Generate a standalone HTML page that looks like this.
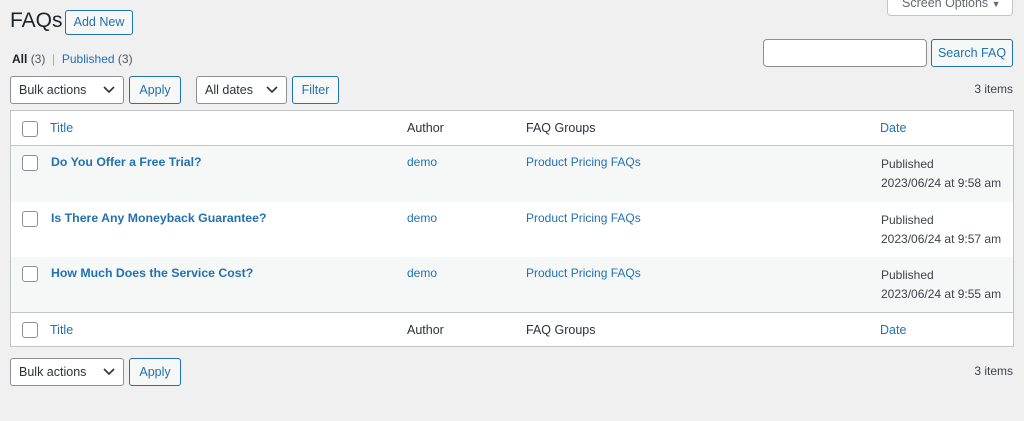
<!DOCTYPE html>
<html><head><style>
body{margin:0;width:1024px;height:421px;background:#f0f0f1;font-family:"Liberation Sans",sans-serif;font-size:13px;color:#3c434a;position:relative;overflow:hidden}
.a{position:absolute;white-space:nowrap}
a{color:#2271b1;text-decoration:none}
.btn{position:absolute;border:1px solid #2271b1;color:#2271b1;background:#f6f7f7;border-radius:3px;box-sizing:border-box;text-align:center;font-size:12.5px}
.sel{position:absolute;border:1px solid #8c8f94;background:#fff;border-radius:3px;box-sizing:border-box;padding-left:8px;font-size:12.5px;color:#2c3338}
.sel svg{position:absolute;right:8px;top:9px}
.cb{position:absolute;width:14px;height:14px;border:1px solid #8c8f94;border-radius:3px;background:#fff}
table{position:absolute;left:10px;top:110px;width:1004px;border-collapse:collapse;border:1px solid #c3c4c7;background:#fff}
td{padding:0;vertical-align:top;position:relative}
.t{font-weight:bold;font-size:12.3px}
</style></head><body>
<div class="a" style="left:10px;top:9px;font-size:21px;color:#1d2327">FAQs</div>
<div class="btn" style="left:65px;top:10px;width:68px;height:25px;line-height:23px;">Add New</div>
<div class="a" style="left:887px;top:-10px;width:126px;height:26px;background:#fff;border:1px solid #c3c4c7;border-radius:0 0 4px 4px;box-sizing:border-box;color:#646970;line-height:24px;padding-left:14px;font-size:12.5px">Screen Options <span style="font-size:9px">▼</span></div>
<div class="a" style="left:12px;top:52px;font-size:12px"><b style="color:#1d2327;font-weight:600">All</b> <span style="color:#50575e">(3)</span> <span style="color:#a7aaad">&nbsp;|&nbsp;</span> <a>Published</a> <span style="color:#50575e">(3)</span></div>
<div class="a" style="left:763px;top:39px;width:164px;height:28px;background:#fff;border:1px solid #8c8f94;border-radius:4px;box-sizing:border-box"></div>
<div class="btn" style="left:931px;top:39px;width:82px;height:28px;line-height:26px">Search FAQ</div>
<div class="sel" style="left:10px;top:76px;width:114px;height:28px;line-height:26px">Bulk actions<svg width="12" height="8"><path d="M1 1l5 5 5-5" stroke="#2c3338" stroke-width="1.6" fill="none"/></svg></div>
<div class="btn" style="left:129px;top:76px;width:52px;height:28px;line-height:26px">Apply</div>
<div class="sel" style="left:196px;top:76px;width:91px;height:28px;line-height:26px">All dates<svg width="12" height="8"><path d="M1 1l5 5 5-5" stroke="#2c3338" stroke-width="1.6" fill="none"/></svg></div>
<div class="btn" style="left:292px;top:76px;width:47px;height:28px;line-height:26px">Filter</div>
<div class="a" style="right:11px;top:82px;font-size:12px">3 items</div>
<table>
<tr style="height:35px;border-bottom:1px solid #c3c4c7"><td style="width:1004px">
<div class="cb" style="left:11px;top:10px"></div>
<a class="a" style="left:39px;top:10px;font-size:12.5px">Title</a><span class="a" style="left:396px;top:10px;color:#2c3338;font-size:12.5px">Author</span><span class="a" style="left:515px;top:10px;color:#2c3338;font-size:12.5px">FAQ Groups</span><a class="a" style="left:869px;top:10px;font-size:12.5px">Date</a></td></tr>
<tr style="height:56px;background:#f6f7f7"><td>
<div class="cb" style="left:11px;top:9px"></div>
<a class="a t" style="left:40px;top:9px">Do You Offer a Free Trial?</a><a class="a" style="left:396px;top:9px;font-size:12px">demo</a><a class="a" style="left:515px;top:9px;font-size:12px">Product Pricing FAQs</a><div class="a" style="left:870px;top:9px;font-size:12px;line-height:19px">Published<br>2023/06/24 at 9:58 am</div></td></tr>
<tr style="height:55px"><td>
<div class="cb" style="left:11px;top:9px"></div>
<a class="a t" style="left:40px;top:9px">Is There Any Moneyback Guarantee?</a><a class="a" style="left:396px;top:9px;font-size:12px">demo</a><a class="a" style="left:515px;top:9px;font-size:12px">Product Pricing FAQs</a><div class="a" style="left:870px;top:9px;font-size:12px;line-height:19px">Published<br>2023/06/24 at 9:57 am</div></td></tr>
<tr style="height:56px;background:#f6f7f7;border-bottom:1px solid #c3c4c7"><td>
<div class="cb" style="left:11px;top:9px"></div>
<a class="a t" style="left:40px;top:9px">How Much Does the Service Cost?</a><a class="a" style="left:396px;top:9px;font-size:12px">demo</a><a class="a" style="left:515px;top:9px;font-size:12px">Product Pricing FAQs</a><div class="a" style="left:870px;top:9px;font-size:12px;line-height:19px">Published<br>2023/06/24 at 9:55 am</div></td></tr>
<tr style="height:34px"><td>
<div class="cb" style="left:11px;top:9px"></div>
<a class="a" style="left:39px;top:10px;font-size:12.5px">Title</a><span class="a" style="left:396px;top:10px;color:#2c3338;font-size:12.5px">Author</span><span class="a" style="left:515px;top:10px;color:#2c3338;font-size:12.5px">FAQ Groups</span><a class="a" style="left:869px;top:10px;font-size:12.5px">Date</a></td></tr>
</table>
<div class="sel" style="left:10px;top:358px;width:114px;height:28px;line-height:26px">Bulk actions<svg width="12" height="8"><path d="M1 1l5 5 5-5" stroke="#2c3338" stroke-width="1.6" fill="none"/></svg></div>
<div class="btn" style="left:129px;top:358px;width:52px;height:28px;line-height:26px">Apply</div>
<div class="a" style="right:11px;top:364px;font-size:12px">3 items</div>
</body></html>
